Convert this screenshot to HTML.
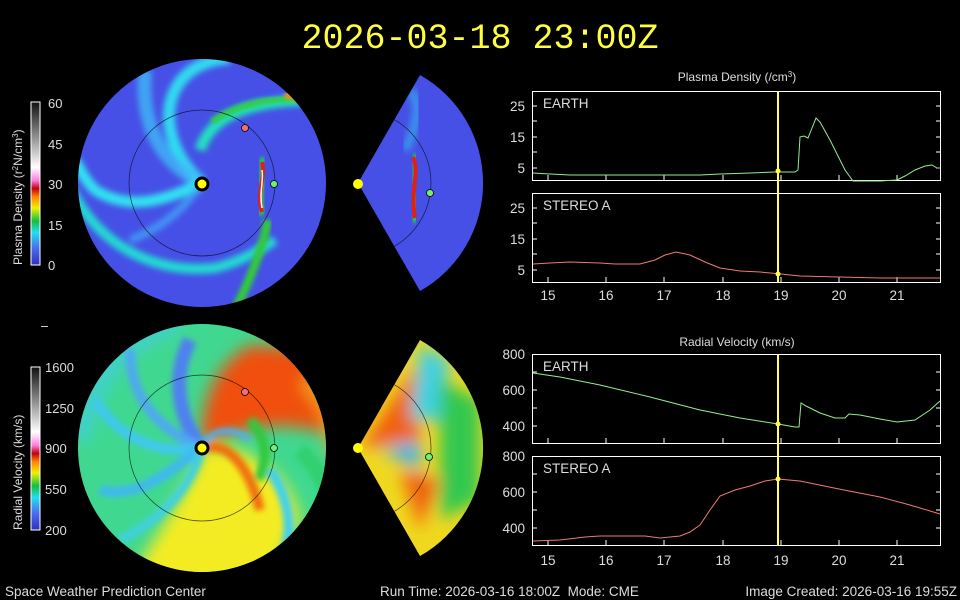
<!DOCTYPE html>
<html><head><meta charset="utf-8"><style>
html,body{margin:0;padding:0;background:#000;width:960px;height:600px;overflow:hidden}
svg{display:block}
text{font-family:"Liberation Sans",sans-serif;fill:#ddd}
</style></head><body>
<svg width="960" height="600" viewBox="0 0 960 600" xmlns="http://www.w3.org/2000/svg">
<defs>
<linearGradient id="cbD" x1="0" y1="1" x2="0" y2="0">
<stop offset="0" stop-color="#3030c0"/><stop offset="0.1" stop-color="#4a6af0"/><stop offset="0.2" stop-color="#20e0f0"/><stop offset="0.27" stop-color="#10c040"/><stop offset="0.35" stop-color="#f0f000"/><stop offset="0.42" stop-color="#ff8000"/><stop offset="0.47" stop-color="#c00010"/><stop offset="0.52" stop-color="#ff80e0"/><stop offset="0.6" stop-color="#ffffff"/><stop offset="1" stop-color="#101010"/>
</linearGradient>
<filter id="b4"><feGaussianBlur stdDeviation="4"/></filter>
<filter id="b3"><feGaussianBlur stdDeviation="3"/></filter>
<filter id="b2"><feGaussianBlur stdDeviation="2"/></filter>
<filter id="b8"><feGaussianBlur stdDeviation="8"/></filter>
<clipPath id="c1"><circle cx="202" cy="183" r="124"/></clipPath>
<clipPath id="w1"><path d="M358,183 L420,75 A124,124 0 0 1 420,291 Z"/></clipPath>
<clipPath id="c2"><circle cx="202" cy="448" r="124"/></clipPath>
<clipPath id="w2"><path d="M358,448 L420,340 A124,124 0 0 1 420,556 Z"/></clipPath>
</defs>

<text x="480" y="48" text-anchor="middle" style="font-family:'Liberation Mono',monospace;font-size:35px;fill:#ffff40">2026-03-18 23:00Z</text>

<!-- density circle -->
<g clip-path="url(#c1)">
<rect x="70" y="50" width="270" height="270" fill="#4650e6"/>
<g fill="none" filter="url(#b3)">
<path d="M202,183 C175,160 160,120 175,90 C185,70 205,60 230,58" stroke="#30d8f0" stroke-width="12"/>
<path d="M202,183 C165,165 140,130 145,70" stroke="#40b8f8" stroke-width="14" opacity="0.8"/>
<path d="M202,183 C175,195 135,215 95,190 C85,180 80,170 75,160" stroke="#30e0f0" stroke-width="11"/>
<path d="M72,190 C95,240 150,275 215,268 C240,262 260,250 275,240" stroke="#20e8d0" stroke-width="10" opacity="0.9"/>
<path d="M202,183 C190,200 170,225 130,240" stroke="#40b0f8" stroke-width="8" opacity="0.7"/>
<path d="M200,150 C210,120 240,100 320,100" stroke="#20e0c0" stroke-width="11"/>
</g>
<path d="M212,122 C240,102 280,96 320,100" stroke="#30d040" stroke-width="6" fill="none" filter="url(#b2)"/>
<path d="M285,95 C305,95 320,100 332,112" stroke="#ff9000" stroke-width="8" fill="none" filter="url(#b2)"/>
<path d="M268,220 C262,250 250,280 235,310" stroke="#30c840" stroke-width="9" fill="none" filter="url(#b2)"/>
<path d="M262,158 C268,175 255,190 262,215" stroke="#20d040" stroke-width="8" fill="none" filter="url(#b2)"/>
<path d="M262,162 C266,178 256,192 262,212" stroke="#e02010" stroke-width="4" fill="none"/>
<path d="M262,170 C264,180 259,192 262,208" stroke="#ffffff" stroke-width="1.5" fill="none"/>
<circle cx="202" cy="183" r="73" fill="none" stroke="#000" stroke-width="0.7" opacity="0.7"/>
</g>
<circle cx="202" cy="184" r="6" fill="#ffff00" stroke="#000" stroke-width="3"/>
<circle cx="245" cy="128" r="3.5" fill="#f07070" stroke="#000" stroke-width="0.8"/>
<circle cx="274" cy="184" r="3.5" fill="#70f070" stroke="#000" stroke-width="0.8"/>

<g clip-path="url(#w1)">
<rect x="350" y="70" width="140" height="230" fill="#4650e6"/>
<path d="M410,90 C420,100 420,120 405,150" stroke="#30d0f0" stroke-width="7" fill="none" filter="url(#b4)" opacity="0.7"/>
<path d="M413,155 C420,170 410,185 415,222" stroke="#20d040" stroke-width="8" fill="none" filter="url(#b2)"/>
<path d="M413,157 C420,172 410,190 415,218" stroke="#e02010" stroke-width="4" fill="none"/>
<circle cx="358" cy="183" r="73" fill="none" stroke="#000" stroke-width="0.7" opacity="0.7"/>
</g>
<circle cx="358" cy="184" r="5" fill="#ffff00"/>
<circle cx="430" cy="193" r="3.5" fill="#70f070" stroke="#000" stroke-width="0.8"/>

<!-- velocity circle -->
<g clip-path="url(#c2)">
<rect x="70" y="320" width="270" height="270" fill="#40d890"/>
<g filter="url(#b8)">
<path d="M202,448 C200,400 215,365 250,345 L340,350 L340,440 C300,420 250,420 202,448 Z" fill="#f05010"/>
<path d="M202,448 C240,440 290,470 300,520 L260,600 L120,600 C150,540 190,490 202,448 Z" fill="#f4ec20"/>
<path d="M305,380 C330,400 338,430 335,455" stroke="#f0a020" stroke-width="16" fill="none"/>
<path d="M80,440 C90,380 120,340 180,320" stroke="#40d0d0" stroke-width="20" fill="none"/>
</g>
<g fill="none" filter="url(#b3)">
<path d="M202,448 C180,420 170,380 190,340" stroke="#5080f0" stroke-width="14"/>
<path d="M202,448 C160,430 130,400 130,350" stroke="#50a8f0" stroke-width="10"/>
<path d="M202,448 C160,455 120,440 95,400" stroke="#40c8f0" stroke-width="10"/>
<path d="M202,448 C170,470 140,500 100,490" stroke="#40b8f0" stroke-width="10"/>
<path d="M202,448 C190,490 160,520 120,540" stroke="#40d0e0" stroke-width="9"/>
<path d="M202,448 C230,440 250,470 260,510" stroke="#f07010" stroke-width="10"/>
<path d="M270,470 C290,500 295,535 280,565" stroke="#40d0f0" stroke-width="10"/>
<path d="M250,420 C268,440 268,460 258,480" stroke="#30c840" stroke-width="10"/>
<path d="M300,450 C320,470 330,490 330,520" stroke="#30d070" stroke-width="16"/>
<path d="M202,448 C210,430 230,425 250,440" stroke="#50b0f0" stroke-width="6"/>
</g>
<circle cx="202" cy="448" r="73" fill="none" stroke="#000" stroke-width="0.7" opacity="0.7"/>
</g>
<circle cx="202" cy="448" r="6" fill="#ffff00" stroke="#000" stroke-width="3"/>
<circle cx="245" cy="392" r="3.5" fill="#f07070" stroke="#000" stroke-width="0.8"/>
<circle cx="274" cy="448" r="3.5" fill="#70f070" stroke="#000" stroke-width="0.8"/>

<g clip-path="url(#w2)">
<rect x="350" y="330" width="140" height="230" fill="#f0d820"/>
<g filter="url(#b8)">
<path d="M360,448 L420,360 L420,440 Z" fill="#f06010"/>
<path d="M420,345 L450,360 L440,420 L410,420 Z" fill="#40d0e0"/>
<path d="M440,380 L480,400 L480,500 L440,520 Z" fill="#30c850"/>
<path d="M380,450 L420,440 L420,470 Z" fill="#40b0f0"/>
<path d="M400,470 L440,480 L420,530 Z" fill="#f06010"/>
</g>
<circle cx="358" cy="448" r="73" fill="none" stroke="#000" stroke-width="0.7" opacity="0.7"/>
</g>
<circle cx="358" cy="448" r="5" fill="#ffff00"/>
<circle cx="429" cy="457" r="3.5" fill="#70f070" stroke="#000" stroke-width="0.8"/>

<!-- colorbars -->
<rect x="31" y="102" width="9" height="163" fill="url(#cbD)" stroke="#fff" stroke-width="1"/>
<text x="48" y="108" font-size="13">60</text>
<text x="48" y="149" font-size="13">45</text>
<text x="48" y="189" font-size="13">30</text>
<text x="48" y="230" font-size="13">15</text>
<text x="48" y="270" font-size="13">0</text>
<text transform="translate(22,265) rotate(-90)" font-size="12">Plasma Density (r<tspan dy="-4" font-size="8">2</tspan><tspan dy="4">N/cm</tspan><tspan dy="-4" font-size="8">3</tspan><tspan dy="4">)</tspan></text>
<rect x="41" y="326" width="7" height="1" fill="#ccc"/>
<rect x="31" y="367" width="9" height="163" fill="url(#cbD)" stroke="#fff" stroke-width="1"/>
<text x="45" y="372" font-size="13">1600</text>
<text x="45" y="413" font-size="13">1250</text>
<text x="45" y="453" font-size="13">900</text>
<text x="45" y="494" font-size="13">550</text>
<text x="45" y="535" font-size="13">200</text>
<text transform="translate(22,530) rotate(-90)" font-size="12">Radial Velocity (km/s)</text>

<!-- charts -->
<g font-size="12">
<text x="737" y="81" text-anchor="middle">Plasma Density (/cm<tspan dy="-4" font-size="8">3</tspan><tspan dy="4">)</tspan></text>
<text x="737" y="346" text-anchor="middle">Radial Velocity (km/s)</text>
</g>
<g fill="none" stroke="#fff" stroke-width="1">
<rect x="532.5" y="91.5" width="408" height="89"/>
<rect x="532.5" y="193.5" width="408" height="89"/>
<rect x="532.5" y="354.5" width="408" height="89"/>
<rect x="532.5" y="456.5" width="408" height="89"/>
</g>
<g stroke="#fff" stroke-width="1">
<path d="M532,106h5M532,121h5M532,137h5M532,152h5M532,168h5M936,106h5M936,121h5M936,137h5M936,152h5M936,168h5"/>
<path d="M532,208h5M532,223h5M532,239h5M532,254h5M532,270h5M936,208h5M936,223h5M936,239h5M936,254h5M936,270h5"/>
<path d="M532,372h5M532,390h5M532,408h5M532,426h5M936,372h5M936,390h5M936,408h5M936,426h5"/>
<path d="M532,474h5M532,492h5M532,510h5M532,528h5M936,474h5M936,492h5M936,510h5M936,528h5"/>
<path d="M548,180v-5M606,180v-5M664,180v-5M723,180v-5M781,180v-5M839,180v-5M897,180v-5"/>
<path d="M548,282v-5M606,282v-5M664,282v-5M723,282v-5M781,282v-5M839,282v-5M897,282v-5"/>
<path d="M548,443v-5M606,443v-5M664,443v-5M723,443v-5M781,443v-5M839,443v-5M897,443v-5"/>
<path d="M548,545v-5M606,545v-5M664,545v-5M723,545v-5M781,545v-5M839,545v-5M897,545v-5"/>
</g>
<g font-size="13.5" text-anchor="end">
<text x="525" y="111">25</text><text x="525" y="142">15</text><text x="525" y="173">5</text>
<text x="525" y="213">25</text><text x="525" y="244">15</text><text x="525" y="275">5</text>
<text x="525" y="359">800</text><text x="525" y="395">600</text><text x="525" y="431">400</text>
<text x="525" y="461">800</text><text x="525" y="497">600</text><text x="525" y="533">400</text>
</g>
<g font-size="13.5" text-anchor="middle">
<text x="548" y="300">15</text><text x="606" y="300">16</text><text x="664" y="300">17</text><text x="723" y="300">18</text><text x="781" y="300">19</text><text x="839" y="300">20</text><text x="897" y="300">21</text>
<text x="548" y="565">15</text><text x="606" y="565">16</text><text x="664" y="565">17</text><text x="723" y="565">18</text><text x="781" y="565">19</text><text x="839" y="565">20</text><text x="897" y="565">21</text>
</g>
<g font-size="13.5">
<text x="543" y="108">EARTH</text><text x="543" y="210">STEREO A</text>
<text x="543" y="371">EARTH</text><text x="543" y="473">STEREO A</text>
</g>
<g fill="none" stroke-width="1">
<polyline stroke="#90f090" points="533,173 550,174 570,175 600,175 640,175 700,175 720,174 750,173 775,172 795,172 798,170 800,137 804,136 808,138 812,128 816,118 820,122 830,140 845,170 853,181 880,181 897,180 905,176 915,170 925,166 932,165 937,168 940,168"/>
<polyline stroke="#f07878" points="533,264 550,263 570,262 600,263 615,264 640,264 655,260 665,255 676,252 690,255 705,262 720,268 740,271 760,272 781,274 800,276 839,277 880,278 940,278"/>
<polyline stroke="#90f090" points="533,373 560,377 600,385 650,397 700,410 740,418 778,424 795,427 799,427 801,403 806,406 820,413 835,418 845,418 849,414 860,415 880,419 897,422 915,420 930,410 940,401"/>
<polyline stroke="#f07878" points="533,541 560,540 585,537 600,536 645,536 660,538 680,536 690,532 700,525 710,510 720,496 735,490 750,486 765,481 778,479 800,481 839,489 880,497 910,505 940,514"/>
</g>
<g stroke="#ffff60" stroke-width="2">
<line x1="778" y1="91" x2="778" y2="283"/>
<line x1="778" y1="354" x2="778" y2="546"/>
</g>
<g fill="#ffff40">
<circle cx="778" cy="171" r="2.5"/><circle cx="778" cy="274" r="2.5"/>
<circle cx="778" cy="424" r="2.5"/><circle cx="778" cy="479" r="2.5"/>
</g>

<g font-size="13.5" style="white-space:pre">
<text x="5" y="596">Space Weather Prediction Center</text>
<text x="380" y="596" xml:space="preserve">Run Time: 2026-03-16 18:00Z  Mode: CME</text>
<text x="957" y="596" text-anchor="end">Image Created: 2026-03-16 19:55Z</text>
</g>
</svg>
</body></html>
